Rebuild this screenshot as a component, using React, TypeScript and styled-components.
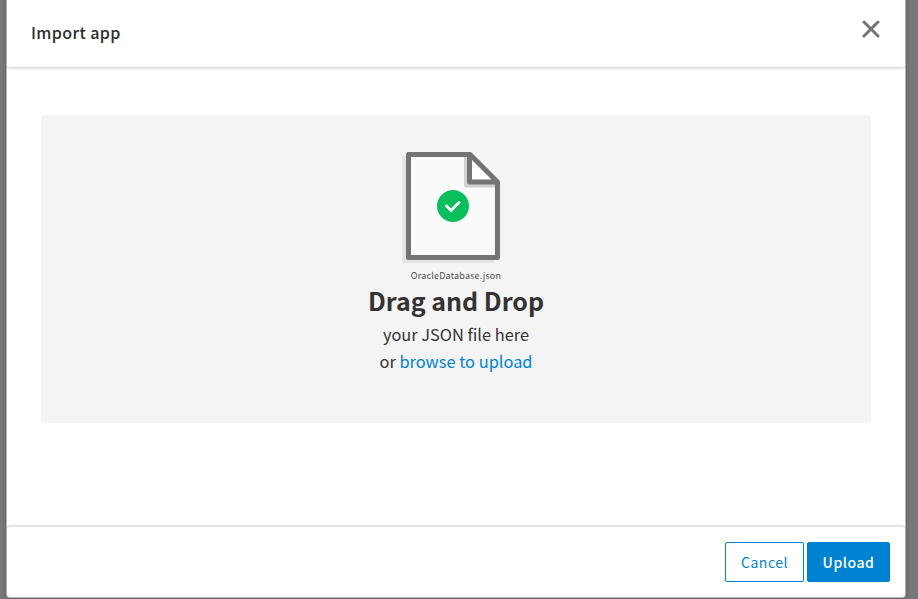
import React from 'react';
import styled, { createGlobalStyle, css } from 'styled-components';

const GlobalStyle = createGlobalStyle`
  * { box-sizing: border-box; }
  body {
    margin: 0;
    background: #787878;
    font-family: "Noto Sans CJK SC", "Noto Sans", sans-serif;
    color: #333;
    overflow: hidden;
  }
`;

const Backdrop = styled.div`
  height: 599px;
  padding: 0 13px 2px 7px;
  background: #787878;
`;

const Modal = styled.section`
  display: flex;
  flex-direction: column;
  height: 597px;
  background: #fff;
  border-radius: 0 0 3px 3px;
  box-shadow: 0 0 0 1px #b4b4b4, 0 0 4px 1px rgba(0, 0, 0, 0.25);
`;

const Header = styled.header`
  display: flex;
  justify-content: space-between;
  height: 67px;
  padding: 20px 25px 0 24px;
  border-radius: 0 0 3px 3px;
  box-shadow: 0 2px 2px rgba(0, 0, 0, 0.13);
`;

const Title = styled.h1`
  margin: -1px 0 0;
  font-size: 16px;
  line-height: 26px;
  font-weight: 500;
  letter-spacing: 0.4px;
  color: #2b2b2b;
`;

const CloseButton = styled.button`
  display: block;
  width: 18px;
  height: 18px;
  padding: 0;
  border: 0;
  background: none;
`;

const Body = styled.main`
  flex: 1;
  padding: 48px 34px 0 34px;
`;

const DropZone = styled.div`
  display: flex;
  flex-direction: column;
  align-items: center;
  height: 308px;
  padding-top: 37px;
  border-radius: 3px;
  background: #f4f4f4;
`;

const FileDrawing = styled.svg`
  display: block;
  width: 100px;
  height: 112px;
  margin-right: 8px;
`;

const FileName = styled.div`
  margin-top: 5px;
  font-size: 9px;
  line-height: 14px;
  letter-spacing: 0.2px;
  color: #4c4c4c;
`;

const DropTitle = styled.h2`
  margin: -1px 0 3px;
  font-size: 25px;
  line-height: 36px;
  font-weight: 700;
`;

const DropLine = styled.p`
  margin: 0;
  font-size: 16.4px;
  line-height: 27px;
`;

const BrowseLink = styled.a`
  color: #0082d2;
`;

const Footer = styled.footer`
  display: flex;
  justify-content: flex-end;
  gap: 3px;
  height: 70px;
  padding: 15px 15px 0 0;
  border-radius: 3px;
  box-shadow: 0 -2px 2px rgba(0, 0, 0, 0.13);
`;

const Button = styled.button<{ $primary?: boolean }>`
  height: 40px;
  width: 79px;
  padding: 0;
  border: 1px solid #0082d2;
  border-radius: 2px;
  background: #fff;
  color: #0082d2;
  font-family: inherit;
  font-size: 14px;
  line-height: 38px;
  letter-spacing: 0.5px;
  ${({ $primary }) =>
    $primary &&
    css`
      width: 83px;
      background: #0082d2;
      color: #fff;
      font-weight: 500;
      letter-spacing: 0.55px;
    `}
`;

function FileIcon() {
  return (
    <FileDrawing viewBox="0 0 100 112">
      <path d="M0 4h8v102h84v5H2q-2 0-2-2z" fill="#e4e4e4" />
      <path d="M6.5 2.5H67L95.500 30V105.500H6.500z" fill="#fafafa" />
      <path d="M62 5h5v25h27v5.500H64q-2 0-2-2z" fill="#d2d0d0" />
      <path d="M67.500 3.500V30H95z" fill="#fff" />
      <path
        d="M6.500 2.500H68L95.500 30V105.500H6.500zM67.500 3V30H95"
        fill="none"
        stroke="#747474"
        strokeWidth="5"
        strokeLinejoin="round"
      />
      <circle cx="51" cy="54" r="16" fill="#08bf5b" />
      <path
        d="M44.500 54l4.500 4.500 8-8"
        fill="none"
        stroke="#fff"
        strokeWidth="2.800"
        strokeLinecap="round"
        strokeLinejoin="miter"
      />
    </FileDrawing>
  );
}

export default function App() {
  return (
    <>
      <GlobalStyle />
      <Backdrop>
        <Modal role="dialog" aria-label="Import app">
          <Header>
            <Title>Import app</Title>
            <CloseButton aria-label="Close">
              <svg width="18" height="18" viewBox="0 0 18 18">
                <path d="M2 2l14 14M16 2L2 16" stroke="#747474" strokeWidth="3" strokeLinecap="round" />
              </svg>
            </CloseButton>
          </Header>
          <Body>
            <DropZone>
              <FileIcon />
              <FileName>OracleDatabase.json</FileName>
              <DropTitle>Drag and Drop</DropTitle>
              <DropLine>your JSON file here</DropLine>
              <DropLine>
                or <BrowseLink>browse to upload</BrowseLink>
              </DropLine>
            </DropZone>
          </Body>
          <Footer>
            <Button>Cancel</Button>
            <Button $primary>Upload</Button>
          </Footer>
        </Modal>
      </Backdrop>
    </>
  );
}
